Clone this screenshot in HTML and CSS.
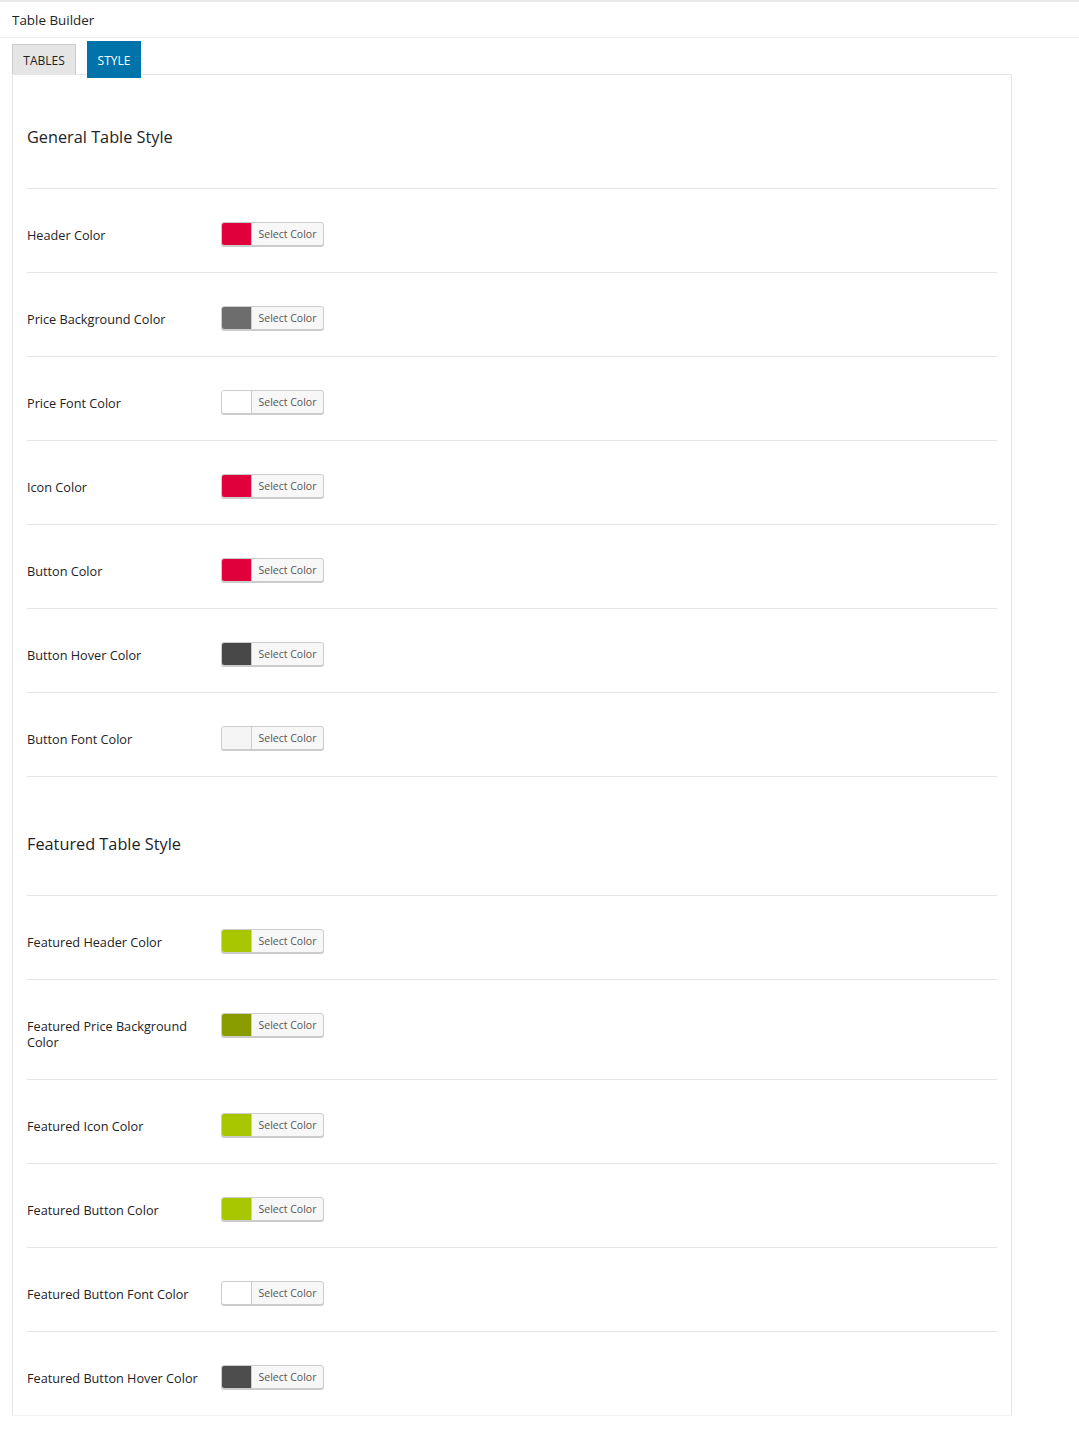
FILE: index.html
```html
<!DOCTYPE html>
<html lang="en">
<head>
<meta charset="utf-8">
<title>Table Builder</title>
<link rel="stylesheet" href="styles.css">
</head>
<body>
<div class="top-rule"></div>
<header class="title-bar">Table Builder</header>
<nav class="tabs">
  <a class="tab">TABLES</a>
  <a class="tab tab-active">STYLE</a>
</nav>
<main class="panel">
  <section class="section">
    <h2 class="section-title">General Table Style</h2>
    <div class="row"><div class="label">Header Color</div><div class="picker"><span class="swatch" style="background:#e0003b"></span><span class="picker-text">Select Color</span></div></div>
    <div class="row"><div class="label">Price Background Color</div><div class="picker"><span class="swatch" style="background:#6d6d6d"></span><span class="picker-text">Select Color</span></div></div>
    <div class="row"><div class="label">Price Font Color</div><div class="picker"><span class="swatch" style="background:#ffffff"></span><span class="picker-text">Select Color</span></div></div>
    <div class="row"><div class="label">Icon Color</div><div class="picker"><span class="swatch" style="background:#e0003b"></span><span class="picker-text">Select Color</span></div></div>
    <div class="row"><div class="label">Button Color</div><div class="picker"><span class="swatch" style="background:#e0003b"></span><span class="picker-text">Select Color</span></div></div>
    <div class="row"><div class="label">Button Hover Color</div><div class="picker"><span class="swatch" style="background:#484848"></span><span class="picker-text">Select Color</span></div></div>
    <div class="row"><div class="label">Button Font Color</div><div class="picker"><span class="swatch" style="background:#f5f5f5"></span><span class="picker-text">Select Color</span></div></div>
  </section>
  <section class="section">
    <h2 class="section-title">Featured Table Style</h2>
    <div class="row"><div class="label">Featured Header Color</div><div class="picker"><span class="swatch" style="background:#a8c700"></span><span class="picker-text">Select Color</span></div></div>
    <div class="row"><div class="label">Featured Price Background Color</div><div class="picker"><span class="swatch" style="background:#8a9d00"></span><span class="picker-text">Select Color</span></div></div>
    <div class="row"><div class="label">Featured Icon Color</div><div class="picker"><span class="swatch" style="background:#a8c700"></span><span class="picker-text">Select Color</span></div></div>
    <div class="row"><div class="label">Featured Button Color</div><div class="picker"><span class="swatch" style="background:#a8c700"></span><span class="picker-text">Select Color</span></div></div>
    <div class="row"><div class="label">Featured Button Font Color</div><div class="picker"><span class="swatch" style="background:#ffffff"></span><span class="picker-text">Select Color</span></div></div>
    <div class="row"><div class="label">Featured Button Hover Color</div><div class="picker"><span class="swatch" style="background:#4d4d4d"></span><span class="picker-text">Select Color</span></div></div>
  </section>
</main>
</body>
</html>
```
FILE: styles.css
```css
* { box-sizing: border-box; }
html, body { margin: 0; padding: 0; background: #ffffff; }
body {
  font-family: "Open Sans", "Noto Sans", "Liberation Sans", sans-serif;
  color: #1d2327;
  font-size: 13px;
}
.top-rule { height: 2px; background: #e8e8e8; }
.title-bar {
  height: 36px;
  line-height: 36px;
  padding: 0 12px;
  font-size: 13.4px;
  border-bottom: 1px solid #eeeeee;
}
.tabs {
  display: flex;
  align-items: flex-start;
  gap: 11px;
  height: 36px;
  padding: 3px 12px 0;
}
.tab {
  display: flex;
  align-items: center;
  justify-content: center;
  padding-top: 1px;
  font-size: 12px;
  color: #1d2327;
  text-decoration: none;
}
.tabs .tab:first-child {
  margin-top: 3px;
  width: 64px;
  height: 30px;
  background: #e5e5e5;
  border: 1px solid #cccccc;
  border-bottom: none;
}
.tab-active {
  position: relative;
  z-index: 1;
  width: 54px;
  height: 37px;
  background: #0073aa;
  color: #ffffff;
}
.tabs .tab-active { color: #ffffff; }
.panel {
  width: 1000px;
  margin: 0 12px;
  border: 1px solid #e5e5e5;
  border-bottom-color: #f3f3f3;
  padding: 0 14px;
}
.section-title {
  margin: 0;
  padding: 50px 0 39px;
  font-size: 16.3px;
  line-height: 24px;
  font-weight: 400;
  color: #1d2327;
  border-bottom: 1px solid #e5e5e5;
}
.section + .section .section-title { padding-top: 55px; }
.row {
  display: flex;
  align-items: flex-start;
  padding: 33px 0 26px;
  border-bottom: 1px solid #e5e5e5;
}
.section:last-child .row:last-child { border-bottom: none; }
.label {
  width: 194px;
  padding: 5px 10px 3px 0;
  line-height: 16px;
  font-size: 12.7px;
  color: #1d2327;
}
.picker {
  display: flex;
  width: 103px;
  height: 24px;
  border: 1px solid #cccccc;
  border-radius: 3px;
  background: #f7f7f7;
  box-shadow: 0 1px 0 #cccccc;
  overflow: hidden;
}
.swatch {
  width: 30px;
  height: 100%;
  border-right: 1px solid #cccccc;
}
.picker-text {
  flex: 1;
  font-size: 10.5px;
  line-height: 22px;
  color: #555555;
  text-align: center;
}
```
